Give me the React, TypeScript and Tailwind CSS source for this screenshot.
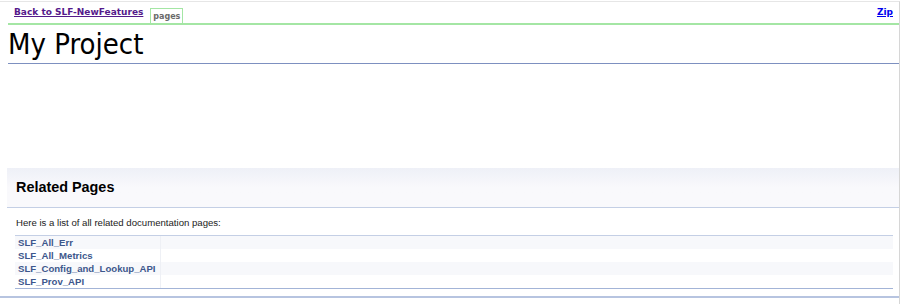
import React from "react";

const rows = ["SLF_All_Err", "SLF_All_Metrics", "SLF_Config_and_Lookup_API", "SLF_Prov_API"];

export default function App() {
  return (
    <div className="w-[903px] h-[304px] bg-white overflow-hidden">
      <div className="w-[900px] h-[304px] mt-px border-t border-t-[#e6e6e6] border-r border-r-[#d6d6d6] flex flex-col">
        {/* top nav */}
        <div className="ml-2 h-[23px] border-b-2 border-b-[#a4e6a4] flex items-end justify-between" style={{ fontFamily: "'DejaVu Sans', Verdana, sans-serif" }}>
          <div className="flex items-end">
            <a href="#" className="ml-[6px] mb-[5px] text-[9px] font-bold text-[#551a8b] underline leading-[11px]">Back to SLF-NewFeatures</a>
            <div className="ml-[7px] h-[15px] w-[33px] border border-b-0 border-[#a4e6a4] text-[8px] font-bold text-[#6a6a6a] flex items-center justify-center leading-none pt-px">pages</div>
          </div>
          <a href="#" className="mr-[6px] mb-[5px] text-[9px] font-bold text-[#0000ee] underline leading-[11px]">Zip</a>
        </div>
        {/* project title */}
        <div className="ml-2 h-[39px] border-b border-b-[#7d90c0] flex items-center">
          <span className="text-[29px] leading-none text-black" style={{ fontFamily: "Tahoma, 'DejaVu Sans Condensed', 'DejaVu Sans', sans-serif" }}>My Project</span>
        </div>
        <div className="h-[104px]" />
        {/* related pages header */}
        <div className="ml-[7px] h-[40px] border-b border-b-[#c4cfe5] bg-gradient-to-b from-[#eef0f7] via-[#f9f9fc] to-[#f9f9fc] flex items-center" style={{ fontFamily: "'Liberation Sans', Arial, sans-serif" }}>
          <span className="ml-[9px] mt-[1px] text-[14.4px] font-bold text-black">Related Pages</span>
        </div>
        <div className="pl-4 pt-[9px] text-[9.6px] text-[#222] leading-[11px]" style={{ fontFamily: "'Liberation Sans', Arial, sans-serif" }}>
          Here is a list of all related documentation pages:
        </div>
        <div className="ml-[15px] mt-[7px] w-[878px] border-t border-t-[#c4cfe5] border-b border-b-[#a3b4d7]" style={{ fontFamily: "'Liberation Sans', Arial, sans-serif" }}>
          {rows.map((r, i) => (
            <div key={r} className={`flex h-[13px] ${i % 2 === 0 ? "bg-[#f7f8fb]" : "bg-white"}`}>
              <div className="w-[146px] border-r border-r-[#eef0f5] pl-[3px] text-[9.6px] font-bold text-[#3d578c] leading-[13px]">{r}</div>
              <div className="flex-1" />
            </div>
          ))}
        </div>
        <div className="mt-[7px] h-[2px] bg-[#b7c4e0]" />
      </div>
    </div>
  );
}
